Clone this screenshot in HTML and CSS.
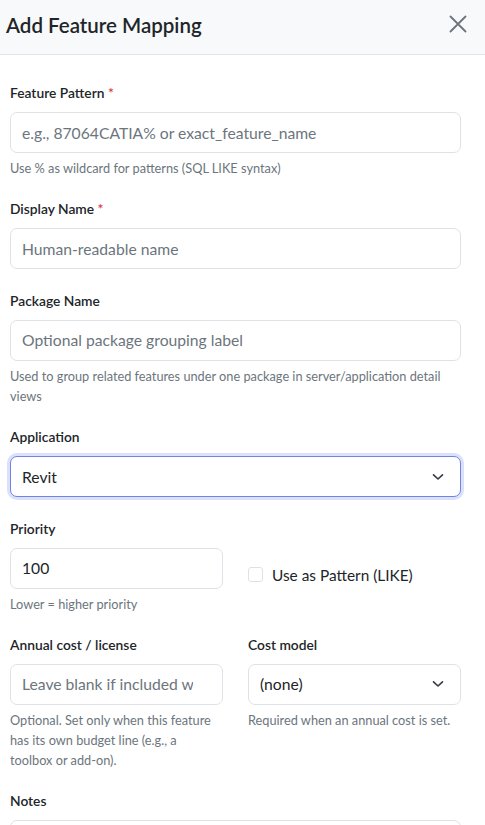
FILE: index.html
```html
<!DOCTYPE html>
<html lang="en">
<head>
<meta charset="utf-8">
<title>Add Feature Mapping</title>
<link rel="stylesheet" href="styles.css">
</head>
<body>
<div class="modal">
  <div class="modal-header">
    <h2 class="modal-title">Add Feature Mapping</h2>
    <button class="close" type="button" aria-label="Close">
      <svg width="18" height="18" viewBox="0 0 18 18"><path d="M1.5 1.5 L16.5 16.5 M16.5 1.5 L1.5 16.5" stroke="#6c757d" stroke-width="1.8" stroke-linecap="round" fill="none"/></svg>
    </button>
  </div>
  <div class="modal-body">
    <div class="group">
      <label class="label">Feature Pattern <span class="req">*</span></label>
      <input class="input" type="text" placeholder="e.g., 87064CATIA% or exact_feature_name">
      <div class="help">Use % as wildcard for patterns (SQL LIKE syntax)</div>
    </div>
    <div class="group">
      <label class="label">Display Name <span class="req">*</span></label>
      <input class="input" type="text" placeholder="Human-readable name">
    </div>
    <div class="group">
      <label class="label">Package Name</label>
      <input class="input" type="text" placeholder="Optional package grouping label">
      <div class="help">Used to group related features under one package in server/application detail views</div>
    </div>
    <div class="group">
      <label class="label">Application</label>
      <div class="select focus">
        <span>Revit</span>
        <svg class="chev" width="12" height="8" viewBox="0 0 12 8"><path d="M1.5 1.8 L6 6 L10.5 1.8" stroke="#343a40" stroke-width="1.6" fill="none" stroke-linecap="round" stroke-linejoin="round"/></svg>
      </div>
    </div>
    <div class="group row">
      <div class="col">
        <label class="label">Priority</label>
        <input class="input" type="number" value="100">
        <div class="help">Lower = higher priority</div>
      </div>
      <div class="col check-col">
        <label class="check"><span class="box"></span><span>Use as Pattern (LIKE)</span></label>
      </div>
    </div>
    <div class="group row">
      <div class="col">
        <label class="label">Annual cost / license</label>
        <input class="input num-pad" type="number" placeholder="Leave blank if included with base license">
        <div class="help narrow">Optional. Set only when this feature has its own budget line (e.g., a toolbox or add-on).</div>
      </div>
      <div class="col">
        <label class="label">Cost model</label>
        <div class="select">
          <span>(none)</span>
          <svg class="chev" width="12" height="8" viewBox="0 0 12 8"><path d="M1.5 1.8 L6 6 L10.5 1.8" stroke="#343a40" stroke-width="1.6" fill="none" stroke-linecap="round" stroke-linejoin="round"/></svg>
        </div>
        <div class="help">Required when an annual cost is set.</div>
      </div>
    </div>
    <div class="group">
      <label class="label">Notes</label>
      <textarea class="input textarea"></textarea>
    </div>
  </div>
</div>
</body>
</html>
```

FILE: styles.css
```css
* { box-sizing: border-box; }
html, body { margin: 0; padding: 0; background: #fff; }
body {
  font-family: Lato, "Noto Sans", "Liberation Sans", sans-serif;
  color: #212529;
  overflow: hidden;
}
.modal { width: 485px; }
.modal-header {
  height: 55px;
  background: #f8f9fa;
  border-bottom: 1px solid #e3e5e8;
  display: flex;
  align-items: center;
  justify-content: space-between;
  padding: 0 18px 0 6px;
}
.modal-title {
  margin: 0;
  font-size: 20.5px;
  font-weight: 600;
  color: #212529;
  line-height: 1;
  padding-bottom: 4px;
}
.close {
  border: 0;
  background: none;
  padding: 0;
  width: 18px;
  height: 18px;
  display: flex;
  margin-bottom: 6px;
}
.modal-body {
  padding: 28px 24px 0 10px;
}
.group { margin-bottom: 21.4px; }
.label {
  display: block;
  font-size: 13.8px;
  font-weight: 600;
  line-height: 20px;
  margin-bottom: 9px;
  color: #212529;
}
.req { color: #dc3545; }
.input {
  display: block;
  width: 100%;
  height: 41px;
  border: 1px solid #dee2e6;
  border-radius: 7px;
  padding: 0 11px;
  font-family: inherit;
  font-size: 15.7px;
  color: #212529;
  background: #fff;
  outline: none;
}
.num-pad { padding-right: 14px; }
.input::placeholder { color: #6c757d; opacity: 1; }
.input::-webkit-inner-spin-button { opacity: 0; }
.textarea { height: 80px; resize: none; }
.help {
  font-size: 12.75px;
  line-height: 20px;
  color: #6c757d;
  margin-top: 5px;
}
.help.narrow { padding-right: 8px; }
.select {
  height: 41px;
  border: 1px solid #dee2e6;
  border-radius: 7px;
  padding: 0 16px 0 11px;
  display: flex;
  align-items: center;
  justify-content: space-between;
  font-size: 15.7px;
  color: #212529;
  background: #fff;
}
.select.focus {
  border-color: #7083e6;
  box-shadow: 0 0 0 3px #dbe1fb;
}
.row {
  display: grid;
  grid-template-columns: 1fr 1fr;
  column-gap: 25px;
}
.check-col {
  display: flex;
  align-items: flex-start;
  padding-top: 47px;
}
.check {
  display: flex;
  align-items: center;
  gap: 9px;
  font-size: 15.4px;
  color: #212529;
}
.box {
  width: 15px;
  height: 15px;
  border: 1px solid #dee2e6;
  border-radius: 3px;
  background: #fff;
}
```
